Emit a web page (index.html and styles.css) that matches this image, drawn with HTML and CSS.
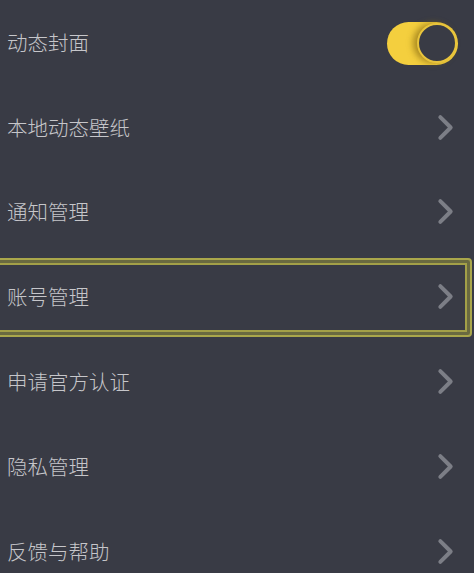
FILE: index.html
```html
<!DOCTYPE html>
<html lang="zh">
<head>
<meta charset="utf-8">
<link rel="stylesheet" href="styles.css">
</head>
<body>
<div class="list">
  <div class="row">
    <span class="label">动态封面</span>
    <span class="toggle"><span class="knob"></span></span>
  </div>
  <div class="row">
    <span class="label">本地动态壁纸</span>
    <svg class="chev" viewBox="0 0 16 26"><path d="M3 3 L13 13 L3 23" /></svg>
  </div>
  <div class="row">
    <span class="label">通知管理</span>
    <svg class="chev" viewBox="0 0 16 26"><path d="M3 3 L13 13 L3 23" /></svg>
  </div>
  <div class="row focused">
    <span class="label">账号管理</span>
    <svg class="chev" viewBox="0 0 16 26"><path d="M3 3 L13 13 L3 23" /></svg>
  </div>
  <div class="row">
    <span class="label">申请官方认证</span>
    <svg class="chev" viewBox="0 0 16 26"><path d="M3 3 L13 13 L3 23" /></svg>
  </div>
  <div class="row">
    <span class="label">隐私管理</span>
    <svg class="chev" viewBox="0 0 16 26"><path d="M3 3 L13 13 L3 23" /></svg>
  </div>
  <div class="row">
    <span class="label">反馈与帮助</span>
    <svg class="chev" viewBox="0 0 16 26"><path d="M3 3 L13 13 L3 23" /></svg>
  </div>
</div>
</body>
</html>
```

FILE: styles.css
```css
html, body {
  margin: 0;
  padding: 0;
  background: #393b45;
  overflow: hidden;
}
body {
  font-family: "Noto Sans CJK SC", "Noto Sans", sans-serif;
}
.list {
  display: flex;
  flex-direction: column;
}
.row {
  position: relative;
  height: 84.8px;
  display: flex;
  align-items: center;
  justify-content: space-between;
  padding: 0 20px 0 7px;
  box-sizing: border-box;
}
.label {
  font-size: 20.5px;
  font-weight: 300;
  line-height: 24px;
  color: #c6c6ca;
  margin-top: -1px;
}
.chev {
  width: 17px;
  height: 27px;
  margin-right: 0;
}
.chev path {
  fill: none;
  stroke: #7c7e86;
  stroke-width: 3.8;
  stroke-linecap: round;
  stroke-linejoin: round;
}
.toggle {
  width: 71px;
  height: 43px;
  border-radius: 22px;
  background: #f4cf3e;
  display: flex;
  align-items: center;
  justify-content: flex-end;
  margin-right: -4px;
  margin-top: 2px;
  box-sizing: border-box;
  padding-right: 1px;
}
.knob {
  width: 40px;
  height: 40px;
  border-radius: 50%;
  background: #393b45;
  border: 2px solid #e8c43c;
  box-sizing: border-box;
  box-shadow: -4px 0 6px rgba(140, 110, 20, 0.7);
}
.focused::after {
  content: "";
  position: absolute;
  left: -10px;
  right: 2px;
  top: 3.6px;
  bottom: 2.4px;
  border: 2px solid #aaa74b;
  border-radius: 4px;
  box-shadow: inset 0 0 0 3px #6a6a40, inset 0 0 0 5px #a3a048;
  pointer-events: none;
}
```
